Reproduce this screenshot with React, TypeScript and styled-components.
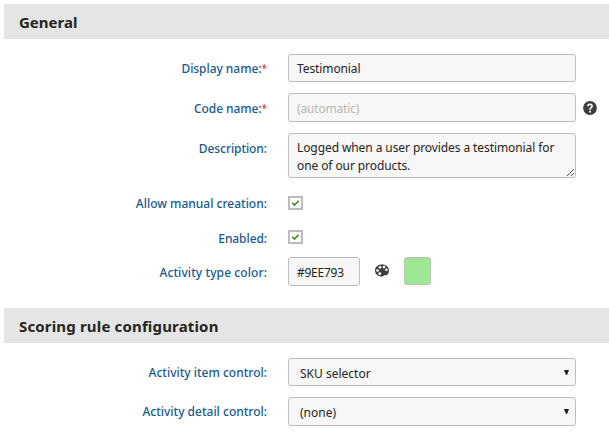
import React from 'react';
import styled, { createGlobalStyle } from 'styled-components';

const Global = createGlobalStyle`
  * { box-sizing: border-box; }
  body { margin: 0; background: #fff; overflow: hidden; }
  body, input, textarea, button { font-family: "Noto Sans", "Open Sans", sans-serif; font-size: 12px; color: #262524; }
`;

const Page = styled.main`
  width: 609px;
  height: 435px;
  padding: 4px 0 0 4px;
  overflow: hidden;
`;

const Heading = styled.h2<{ $spacing: number }>`
  margin: 0;
  height: 35px;
  padding-left: 15px;
  background: #e5e5e5;
  font-size: 15px;
  line-height: 36px;
  font-weight: 700;
  letter-spacing: ${p => p.$spacing}px;
`;

const Fields = styled.div<{ $top: number; $bottom?: number }>`
  padding: ${p => p.$top}px 0 ${p => p.$bottom ?? 0}px;
`;

const Row = styled.div<{ $height: number; $gap?: number }>`
  display: grid;
  grid-template-columns: 263px 1fr;
  column-gap: 21px;
  height: ${p => p.$height}px;
  margin-bottom: ${p => p.$gap ?? 0}px;
`;

const Label = styled.label<{ $top: number; $spacing?: number }>`
  margin-top: ${p => p.$top}px;
  text-align: right;
  white-space: nowrap;
  line-height: 18px;
  font-size: 12px;
  font-weight: 500;
  letter-spacing: ${p => p.$spacing ?? 0}px;
  color: #1a5a8c;
`;

const Required = styled.span`
  font-size: 10px;
  line-height: 1;
  vertical-align: 1px;
  letter-spacing: 0;
  color: #fb3b42;
`;

const Controls = styled.div`
  display: flex;
  align-items: flex-start;
`;

const Input = styled.input<{ $width?: number; $spacing?: number }>`
  width: ${p => p.$width ?? 288}px;
  height: 100%;
  padding: 1px 8px 0;
  border: 1px solid #bdbbbb;
  border-radius: 3px;
  background: #f7f7f7;
  outline: 0;
  letter-spacing: ${p => p.$spacing ?? 0}px;
  &::placeholder { color: #b8b6b6; opacity: 1; }
`;

const AreaWrap = styled.div`
  position: relative;
  width: 288px;
  height: 45px;
`;

const Area = styled.textarea`
  display: block;
  width: 100%;
  height: 100%;
  padding: 5px 8px 3px;
  border: 1px solid #bdbbbb;
  border-radius: 3px;
  background: #f7f7f7;
  line-height: 18px;
  letter-spacing: -0.09px;
  outline: 0;
  resize: none;
  overflow: hidden;
  white-space: pre;
`;

const Grip = styled.svg`
  position: absolute;
  right: 2px;
  bottom: 2px;
`;

const Check = styled.button`
  display: grid;
  place-items: center;
  width: 15px;
  height: 14px;
  padding: 0;
  border: 2px solid #bdbbbb;
  background: #fff;
`;

const Help = styled.svg`
  margin: 8px 0 0 7px;
`;

const Palette = styled.svg`
  margin: 7px 0 0 15px;
`;

const Swatch = styled.div`
  width: 27px;
  height: 28px;
  margin-left: 15px;
  border: 1px solid #bdbbbb;
  border-radius: 3px;
  background: #9ee793;
`;

const Select = styled.button<{ $spacing?: number }>`
  display: flex;
  justify-content: space-between;
  width: 288px;
  height: 100%;
  padding: 6px 6px 0 11px;
  border: 1px solid #bdbbbb;
  border-radius: 3px;
  background: #f7f7f7;
  line-height: 18px;
  text-align: left;
  letter-spacing: ${p => p.$spacing ?? 0}px;
`;

const Arrow = styled.svg`
  margin-top: 5px;
`;

const Tick = () => (
  <Check type="button" role="checkbox" aria-checked="true">
    <svg width="9" height="8" viewBox="0 0 9 8">
      <path d="M1.2 3.8 3.4 6 7.7 1.7" fill="none" stroke="#4c831f" strokeWidth="1.6" />
    </svg>
  </Check>
);

const Down = () => (
  <Arrow width="5" height="5" viewBox="0 0 5 5">
    <path d="M0 0h5L3 5H2z" fill="#1e1e1e" />
  </Arrow>
);

export default function App() {
  return (
    <Page>
      <Global />
      <Heading $spacing={0}>General</Heading>
      <Fields $top={15} $bottom={22}>
        <Row $height={28} $gap={11}>
          <Label $top={6} $spacing={-0.05}>Display name:<Required>*</Required></Label>
          <Controls><Input readOnly value="Testimonial" $spacing={-0.1} /></Controls>
        </Row>
        <Row $height={29} $gap={11}>
          <Label $top={7} $spacing={-0.08}>Code name:<Required>*</Required></Label>
          <Controls>
            <Input readOnly placeholder="(automatic)" $spacing={-0.17} />
            <Help width="14" height="14" viewBox="0 0 14 14">
              <circle cx="7" cy="7" r="6.9" fill="#403e3d" />
              <path d="M4.9 5.2C4.9 2.7 9.1 2.6 9.1 5.1 9.1 6.6 7 6.7 7 8.7" fill="none" stroke="#fff" strokeWidth="1.7" />
              <path d="M6.1 9.7h1.8v1.7H6.1z" fill="#fff" />
            </Help>
          </Controls>
        </Row>
        <Row $height={45} $gap={18}>
          <Label $top={7} $spacing={-0.08}>Description:</Label>
          <Controls>
            <AreaWrap>
              <Area readOnly value={'Logged when a user provides a testimonial for\none of our products.'} />
              <Grip width="7" height="7" viewBox="0 0 7 7">
                <path d="M0 7 7 0M4 7 7 4" stroke="#555" strokeWidth="1" />
              </Grip>
            </AreaWrap>
          </Controls>
        </Row>
        <Row $height={14} $gap={20}>
          <Label $top={-1}>Allow manual creation:</Label>
          <Controls><Tick /></Controls>
        </Row>
        <Row $height={14} $gap={13}>
          <Label $top={0} $spacing={-0.08}>Enabled:</Label>
          <Controls><Tick /></Controls>
        </Row>
        <Row $height={29}>
          <Label $top={7} $spacing={0.09}>Activity type color:</Label>
          <Controls>
            <Input $width={72} readOnly value="#9EE793" $spacing={-0.25} />
            <Palette width="14" height="13" viewBox="0 0 14 13">
              <path d="M7 .5C3 .5 0 3 0 6.5s3 6 7 6c1.1 0 1.1-.6 1.8-1.1.6-.4 1.3-.2 2.3-.1C12.7 11.4 14 9.1 14 6.5 14 3 11 .5 7 .5z" fill="#403e3d" />
              <g fill="#fff">
                <circle cx="5" cy="3.3" r="1.35" />
                <circle cx="9" cy="3.1" r="1.35" />
                <circle cx="2.5" cy="6.5" r="1.35" />
                <circle cx="4.8" cy="9.7" r="1.4" />
                <circle cx="11.5" cy="5.7" r="1.3" />
              </g>
            </Palette>
            <Swatch />
          </Controls>
        </Row>
      </Fields>
      <Heading $spacing={0.16}>Scoring rule configuration</Heading>
      <Fields $top={15}>
        <Row $height={28} $gap={11}>
          <Label $top={6}>Activity item control:</Label>
          <Controls><Select type="button"><span>SKU selector</span><Down /></Select></Controls>
        </Row>
        <Row $height={29}>
          <Label $top={6}>Activity detail control:</Label>
          <Controls><Select type="button"><span>(none)</span><Down /></Select></Controls>
        </Row>
      </Fields>
    </Page>
  );
}
